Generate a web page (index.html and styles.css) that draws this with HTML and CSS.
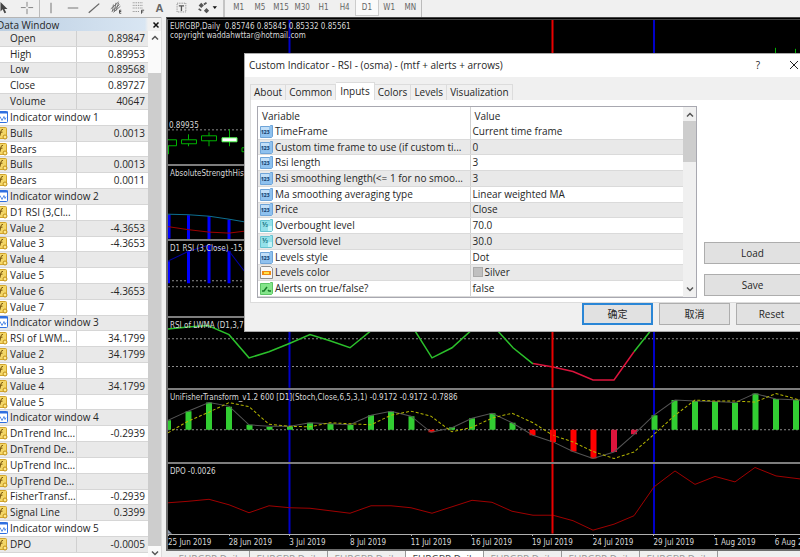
FILE: index.html
```html
<!DOCTYPE html>
<html lang="en">

<head>
	<meta charset="UTF-8" />
	<meta name="viewport" content="width=device-width, initial-scale=1.0" />
	<title>EURGBP,Daily</title>
	<link rel="stylesheet" href="styles.css">
</head>

<body>
	<svg class="sprite" aria-hidden="true">
		<symbol id="i-fx" viewBox="0 0 13 13">
			<rect x="0.5" y="0.5" width="11" height="11" rx="1" fill="#f3d667" stroke="#d2a52c" />
			<path d="M8 2.5q-1.500-.6-2 1.500l-1 4.500q-.4 1.500-1.500 1M4 5.200h3.500" fill="none" stroke="#7d5a10" />
			<circle cx="10" cy="10" r="2" fill="#ffe98a" stroke="#c08f18" />
		</symbol>
		<symbol id="i-win" viewBox="0 0 13 13">
			<rect x="0.5" y="0.5" width="12" height="11" rx="1" fill="#fff" stroke="#2f6fe0" />
			<path d="M0 1.500h13" stroke="#2f6fe0" stroke-width="2" />
			<path d="M3 5.500h2l2 4 2-4 1 3 1-2" fill="none" stroke="#5b8fe8" />
		</symbol>
		<symbol id="i-int" viewBox="0 0 13 13">
			<path d="M.5 1.500h9l1-1h2v11l-1 1H.5z" fill="#8fc1ee" stroke="#6ea4d8" />
			<path d="M1 2h8v3H1z" fill="#c2dff8" />
			<text x="1" y="9" font-size="5" font-weight="bold" fill="#143a66">123</text>
		</symbol>
		<symbol id="i-dbl" viewBox="0 0 13 13">
			<path d="M.5 1.500h9l1-1h2v11l-1 1H.5z" fill="#93e1ea" stroke="#66c3d0" />
			<path d="M8 7h4v5H8z" fill="#c3f3f7" />
			<text x="2" y="8" font-size="7" font-weight="bold" fill="#1c7886">½</text>
		</symbol>
		<symbol id="i-color" viewBox="0 0 13 13">
			<path d="M.5 1.500l1-1h9l2 2v10H.5z" fill="#f6f6f6" stroke="#8d8d8d" />
			<path d="M2 5h9v4H2z" fill="#f08a12" />
			<path d="M4 6h5v2H4z" fill="#ffe34a" />
		</symbol>
		<symbol id="i-bool" viewBox="0 0 13 13">
			<path d="M.5 1.500h9l1-1h2v11l-1 1H.5z" fill="#84e58a" stroke="#5cc565" />
			<path d="M2 9h2l3-4M8 8l1 1h2" fill="none" stroke="#187a28" stroke-width="1.500" />
		</symbol>
		<symbol id="i-up" viewBox="0 0 8 8"><path d="M1 5.500l3-3 3 3" fill="none" stroke="#555" stroke-width="1.500" /></symbol>
		<symbol id="i-down" viewBox="0 0 8 8"><path d="M1 2.500l3 3 3-3" fill="none" stroke="#555" stroke-width="1.500" /></symbol>
	</svg>

	<div class="toolbar">
		<div class="tools pointer-tools">
			<button aria-label="Cursor"><svg viewBox="0 0 16 16"><path d="M4 1v11l2.500-2.500 2 4.500 2-1-2-4H12z" fill="#444" /></svg></button>
			<button aria-label="Crosshair"><svg viewBox="0 0 16 16"><path d="M8 1v5.500M8 9v6M1 7.500h5.500M9.500 7.500H15" stroke="#777" /></svg></button>
		</div>
		<div class="tools line-tools">
			<button aria-label="Vertical line"><svg viewBox="0 0 16 16"><path d="M8 2v12" stroke="#666" /></svg></button>
			<button aria-label="Horizontal line"><svg viewBox="0 0 16 16"><path d="M2 8h12" stroke="#666" /></svg></button>
			<button aria-label="Trendline"><svg viewBox="0 0 16 16"><path d="M2 13.500L14 3" stroke="#666" stroke-width="1.500" /></svg></button>
			<button aria-label="Equidistant channel"><svg viewBox="0 0 16 16"><path d="M2 9l9-8M3 12l9-8M5 13l8-7M5 4L4 12M8 2L6 12M11 2L8 11" fill="none" stroke="#666" /><path d="M14 10.500h-2v3.500h2M12 12h2" fill="none" stroke="#444" /></svg></button>
			<button aria-label="Fibonacci"><svg viewBox="0 0 16 16"><path d="M2 2h12M2 5h12M2 8h12M2 12h8" stroke="#777" stroke-dasharray="1 1" /><path d="M12 14.500v-4h3M12 12.500h2" fill="none" stroke="#444" /></svg></button>
			<button aria-label="Text" class="letter">A</button>
			<button aria-label="Text label"><svg viewBox="0 0 16 16"><path d="M3.500 2.500h10v10h-10z" fill="none" stroke="#777" stroke-dasharray="1 1" /><path d="M5.500 5.500h6M8.500 5.500v6" stroke="#555" stroke-width="1.500" /></svg></button>
		</div>
		<button class="arrows" aria-label="Arrows">
			<svg viewBox="0 0 26 16"><path d="M6 2l3 3-3 3-3-3zM12 8l3 3-3 3-3-3z" fill="#555" /><path d="M3 9l3 2M9 4l3-2" stroke="#555" stroke-width="2" /><path d="M19 6h5l-2.500 3z" fill="#111" /></svg>
		</button>
		<div class="periods">
			<button>M1</button>
			<button>M5</button>
			<button>M15</button>
			<button>M30</button>
			<button>H1</button>
			<button>H4</button>
			<button class="on">D1</button>
			<button>W1</button>
			<button>MN</button>
		</div>
	</div>

	<div class="workspace">
		<aside class="data-window">
			<header>
				<span>Data Window</span>
				<button aria-label="Close data window"><svg viewBox="0 0 8 8"><path d="M1.500 1.500l5 5M6.500 1.500l-5 5" stroke="#111" stroke-width="1.500" /></svg></button>
			</header>
			<div class="data-body">
				<div class="data-scroll">
					<table>
						<tr><td>Open</td><td>0.89847</td></tr>
						<tr><td>High</td><td>0.89953</td></tr>
						<tr><td>Low</td><td>0.89568</td></tr>
						<tr><td>Close</td><td>0.89727</td></tr>
						<tr><td>Volume</td><td>40647</td></tr>
						<tr><th colspan="2"><svg><use href="#i-win" /></svg>Indicator window 1</th></tr>
						<tr><td><svg><use href="#i-fx" /></svg>Bulls</td><td>0.0013</td></tr>
						<tr><td><svg><use href="#i-fx" /></svg>Bears</td><td></td></tr>
						<tr><td><svg><use href="#i-fx" /></svg>Bulls</td><td>0.0013</td></tr>
						<tr><td><svg><use href="#i-fx" /></svg>Bears</td><td>0.0011</td></tr>
						<tr><th colspan="2"><svg><use href="#i-win" /></svg>Indicator window 2</th></tr>
						<tr><td><svg><use href="#i-fx" /></svg>D1 RSI (3,Cl...</td><td></td></tr>
						<tr><td><svg><use href="#i-fx" /></svg>Value 2</td><td>-4.3653</td></tr>
						<tr><td><svg><use href="#i-fx" /></svg>Value 3</td><td>-4.3653</td></tr>
						<tr><td><svg><use href="#i-fx" /></svg>Value 4</td><td></td></tr>
						<tr><td><svg><use href="#i-fx" /></svg>Value 5</td><td></td></tr>
						<tr><td><svg><use href="#i-fx" /></svg>Value 6</td><td>-4.3653</td></tr>
						<tr><td><svg><use href="#i-fx" /></svg>Value 7</td><td></td></tr>
						<tr><th colspan="2"><svg><use href="#i-win" /></svg>Indicator window 3</th></tr>
						<tr><td><svg><use href="#i-fx" /></svg>RSI of LWM...</td><td>34.1799</td></tr>
						<tr><td><svg><use href="#i-fx" /></svg>Value 2</td><td>34.1799</td></tr>
						<tr><td><svg><use href="#i-fx" /></svg>Value 3</td><td></td></tr>
						<tr><td><svg><use href="#i-fx" /></svg>Value 4</td><td>34.1799</td></tr>
						<tr><td><svg><use href="#i-fx" /></svg>Value 5</td><td></td></tr>
						<tr><th colspan="2"><svg><use href="#i-win" /></svg>Indicator window 4</th></tr>
						<tr><td><svg><use href="#i-fx" /></svg>DnTrend Inc...</td><td>-0.2939</td></tr>
						<tr><td><svg><use href="#i-fx" /></svg>DnTrend De...</td><td></td></tr>
						<tr><td><svg><use href="#i-fx" /></svg>UpTrend Inc...</td><td></td></tr>
						<tr><td><svg><use href="#i-fx" /></svg>UpTrend De...</td><td></td></tr>
						<tr><td><svg><use href="#i-fx" /></svg>FisherTransf...</td><td>-0.2939</td></tr>
						<tr><td><svg><use href="#i-fx" /></svg>Signal Line</td><td>0.3399</td></tr>
						<tr><th colspan="2"><svg><use href="#i-win" /></svg>Indicator window 5</th></tr>
						<tr><td><svg><use href="#i-fx" /></svg>DPO</td><td>-0.0005</td></tr>
					</table>
				</div>
				<div class="scrollbar">
					<svg><use href="#i-up" /></svg>
					<div class="thumb"></div>
					<svg><use href="#i-down" /></svg>
				</div>
			</div>
		</aside>

		<main>
			<div class="chart">
				<section class="panel price">
					<svg viewBox="168 20 632 145" preserveAspectRatio="none">
						<path class="blue" d="M289.500 20v145M654 20v145" />
						<path class="red" d="M552.500 20v145" />
						<path class="level" d="M168 130.500h632" />
						<g class="candle">
							<path d="M168.500 140v15M188.500 135v12M209 133v14M229.500 130v17M775.500 48v20M795.500 49v20" />
							<path d="M165.500 140.500h11v6h-11zM181.500 140.500h15v4h-15zM201.500 136.500h15v5h-15z" />
							<path class="full" d="M222 138.500h15v4h-15z" />
							<path d="M242 148.500h14v4h-14z" />
						</g>
					</svg>
					<p>EURGBP,Daily&nbsp; 0.85746 0.85845 0.85332 0.85561<br>copyright waddahwttar@hotmail.com</p>
					<span class="price-tag">0.89935</span>
				</section>
				<section class="panel strength">
					<svg viewBox="168 167 632 73" preserveAspectRatio="none">
						<path class="histo" d="M169 216v24M188.500 216.500v24M209 217.500v24M229 221v24" />
						<polyline stroke="#0d6f92" points="168,215.500 188,216 209,217.500 229,220.500 249,224" />
						<polyline stroke="#a00000" points="168,228 188,231 209,233.500 229,234.500 249,232" />
					</svg>
					<p>AbsoluteStrengthHisto</p>
				</section>
				<section class="panel rsi">
					<svg viewBox="168 242 632 75" preserveAspectRatio="none">
						<path class="level" d="M168 281.500h632M168 287.500h632" />
						<path class="histo" d="M168.500 262v22M188.500 252v32M209 246v38M229 252v32" />
						<polyline stroke="#0000a8" points="168,262 188,252.500 209,246 229,252 249,278" />
					</svg>
					<p>D1 RSI (3,Close) -15.4</p>
				</section>
				<section class="panel lwma">
					<svg viewBox="168 319 632 69" preserveAspectRatio="none">
						<path class="level" d="M168 339.500h632M168 367h632" />
						<path class="blue" d="M289.500 319v69M654 319v69" />
						<path class="thick" stroke="#2bc02b" d="M168 330l20-2 20-1.500 21 9 20 23 20-6 21-8.500 20-8.500 20 6 20 7 21-17 20-9 20 3 21 33 20-10 20-18 20-5 21 23 20 16M634 352.500l20-25" />
						<path class="thick" stroke="#dc143c" d="M533 364l20 3.500 20 4.500 20 8.500h21l20-28" />
						<path class="red" d="M552.500 319v69" />
					</svg>
					<p>RSI of LWMA (D1,3,7</p>
				</section>
				<section class="panel fisher">
					<svg viewBox="168 390 632 72" preserveAspectRatio="none">
						<path class="level" d="M168 429.500h632" />
						<path class="blue" d="M289.500 390v72M654 390v72" />
						<path class="bar-up" d="M168 420v9.500M188.500 411v18.500M209 402.500v27M229 406.500v23M249.500 424.500v5M269.500 426.500v3M290 426v3.500M310 422.500v7M330.500 423.500v6M350.500 424.500v5M371 415v14.500M391 411v18.500M411.500 416v13.500M452 427v2.500M472 418v11.500M492.500 413v16.500M512.500 422.500v7M654.500 415v14.500M674.500 400v29.500M695 401v28.500M715 401.500v28M735 402.500v27M755.500 393.500v36M776 399v30.500M796 400v29.500" />
						<path class="bar-down" stroke="#ff0000" d="M431.500 429.500v2.500M532.500 429.500v5.500M553 429.500v12M573.500 429.500v21.500M593.500 429.500v28.500" />
						<path class="bar-down" stroke="#dc143c" d="M614 429.500v22M634 429.500v4.500" />
						<polyline stroke="#555" points="168,420 188,411 209,402.500 229,406 249,424.500 269,426 290,426 310,422.500 330,423.500 350,424.500 371,415 391,411 411,416 431,432 452,427.500 472,418 492,413 512,422.500 533,435 553,441.500 573,451 593,458 614,451.500 634,434 654,415 675,400 695,401 715,401.500 735,402.500 755,393.500 776,399 800,400" />
						<polyline class="signal" points="168,432.500 188,421 209,412 229,402.500 249,406.500 269,424 290,426 310,426.500 330,422.500 350,423.500 371,424.500 391,415 411,411 431,416 452,431.500 472,427 492,418 512,413 533,422.500 553,435 573,441.500 593,451 614,458 634,451.500 654,434 675,415 695,400 715,401 735,401 755,402 776,393.500 800,400" />
						<path class="red" d="M552.500 390v72" />
					</svg>
					<p>UniFisherTransform_v1.2 600 [D1](Stoch,Close,6,5,3,1) -0.9172 -0.9172 -0.7886</p>
				</section>
				<section class="panel dpo">
					<svg viewBox="168 464 632 70" preserveAspectRatio="none">
						<path class="blue" d="M289.500 464v70M654 464v70" />
						<polyline stroke="#a00000" points="168,503 188,501.500 209,499.500 229,505 249,513 269,506 290,508 310,508.500 330,511 350,513.500 371,506 391,506 411,508 432,513.500 452,507 472,500.500 492,502.500 512,511.500 533,515.500 553,515.500 573,521 593,530.500 614,524.500 634,516 654,487 675,471 695,484.500 715,476.500 735,482 755,467.500 776,476 800,479" />
						<path class="red" d="M552.500 464v70" />
						<path d="M168 530v4h4z" fill="#8f9cb0" />
					</svg>
					<p>DPO -0.0026</p>
				</section>
				<div class="dates">
					<time>25 Jun 2019</time>
					<time>28 Jun 2019</time>
					<time>3 Jul 2019</time>
					<time>8 Jul 2019</time>
					<time>11 Jul 2019</time>
					<time>16 Jul 2019</time>
					<time>19 Jul 2019</time>
					<time>24 Jul 2019</time>
					<time>29 Jul 2019</time>
					<time>1 Aug 2019</time>
					<time>6 Aug 2019</time>
				</div>
			</div>
			<nav class="chart-tabs">
				<button>EURGBP,Daily</button>
				<button>EURGBP,Daily</button>
				<button>EURGBP,Daily</button>
				<button class="on">EURGBP,Daily</button>
				<button>EURGBP,Daily</button>
				<button>EURGBP,Daily</button>
				<button>EURGBP,Daily</button>
			</nav>
		</main>
	</div>

	<div class="dialog" role="dialog" aria-labelledby="dialog-title">
		<header>
			<h1 id="dialog-title">Custom Indicator - RSI - (osma) - (mtf + alerts + arrows)</h1>
			<button aria-label="Help">?</button>
			<button aria-label="Close"><svg viewBox="0 0 8 8"><path d="M0 0l8 8M8 0L0 8" stroke="#222" /></svg></button>
		</header>
		<div class="tabs" role="tablist">
			<button role="tab">About</button>
			<button role="tab">Common</button>
			<button role="tab" class="on" aria-selected="true">Inputs</button>
			<button role="tab">Colors</button>
			<button role="tab">Levels</button>
			<button role="tab">Visualization</button>
		</div>
		<div class="page">
			<div class="inputs">
				<table>
					<thead>
						<tr><th>Variable</th><th>Value</th></tr>
					</thead>
					<tbody>
						<tr><td><svg><use href="#i-int" /></svg>TimeFrame</td><td>Current time frame</td></tr>
						<tr><td><svg><use href="#i-int" /></svg>Custom time frame to use (if custom ti...</td><td>0</td></tr>
						<tr><td><svg><use href="#i-int" /></svg>Rsi length</td><td>3</td></tr>
						<tr><td><svg><use href="#i-int" /></svg>Rsi smoothing length(&lt;= 1 for no smoo...</td><td>3</td></tr>
						<tr><td><svg><use href="#i-int" /></svg>Ma smoothing averaging type</td><td>Linear weighted MA</td></tr>
						<tr><td><svg><use href="#i-int" /></svg>Price</td><td>Close</td></tr>
						<tr><td><svg><use href="#i-dbl" /></svg>Overbought level</td><td>70.0</td></tr>
						<tr><td><svg><use href="#i-dbl" /></svg>Oversold level</td><td>30.0</td></tr>
						<tr><td><svg><use href="#i-int" /></svg>Levels style</td><td>Dot</td></tr>
						<tr><td><svg><use href="#i-color" /></svg>Levels color</td><td><i class="swatch"></i>Silver</td></tr>
						<tr><td><svg><use href="#i-bool" /></svg>Alerts on true/false?</td><td>false</td></tr>
					</tbody>
				</table>
				<div class="scrollbar">
					<svg><use href="#i-up" /></svg>
					<div class="thumb"></div>
					<svg><use href="#i-down" /></svg>
				</div>
			</div>
			<div class="side">
				<button class="btn">Load</button>
				<button class="btn">Save</button>
			</div>
		</div>
		<footer>
			<button class="btn default">确定</button>
			<button class="btn">取消</button>
			<button class="btn">Reset</button>
		</footer>
	</div>
</body>

</html>
```

FILE: styles.css
```css
* {
	box-sizing: border-box;
}

body {
	margin: 0;
	height: 100vh;
	overflow: hidden;
	position: relative;
	display: flex;
	flex-direction: column;
	background-color: #f0f0f0;
	color: #262626;
	font-family: "Open Sans", "Noto Sans CJK SC", sans-serif;
	font-size: 10px;
	line-height: 14px;
}

button {
	margin: 0;
	padding: 0;
	border: 0;
	background: none;
	color: inherit;
	font: inherit;
}

table {
	border-collapse: collapse;
	table-layout: fixed;
}

td,
th {
	padding: 0;
	font-weight: normal;
	text-align: left;
	white-space: nowrap;
	overflow: hidden;
}

.sprite {
	display: none;
}

/* toolbar */
.toolbar {
	flex: none;
	display: flex;
	height: 17px;
	color: #666;
}

.toolbar button {
	flex: 1;
	display: flex;
	justify-content: center;
	align-items: center;
	height: 16px;
}

.toolbar svg {
	height: 14px;
	flex: none;
}

.pointer-tools {
	width: 40px;
	border-right: 1px solid #bbb;
}

.pointer-tools button:first-child {
	margin-left: -8px;
}

.tools {
	display: flex;
}

.line-tools {
	width: 152px;
}

.toolbar .letter {
	font-family: "Liberation Sans", sans-serif;
	font-weight: bold;
	font-size: 11px;
}

.toolbar .arrows {
	flex: none;
	width: 31px;
}

.periods {
	display: flex;
	width: 199px;
	padding-left: 3px;
	border-left: 2px solid #c4c4c4;
	border-right: 1px solid #bbb;
	font-family: "DejaVu Sans Condensed", "DejaVu Sans", sans-serif;
	font-size: 8px;
}

.periods .on {
	background-color: #fafafa;
	border: 1px solid #ccc;
	border-top: 0;
}

/* data window */
.workspace {
	flex: 1;
	min-height: 0;
	display: flex;
}

.data-window {
	flex: none;
	display: flex;
	flex-direction: column;
	width: 162px;
	border-right: 1px solid #ddd;
}

.data-window header {
	display: flex;
	justify-content: space-between;
	height: 14px;
	border-top: 1px solid #b5b5b5;
	background: linear-gradient(90deg, #bccfe2, #d9e6f3 90%, #f0f0f0 92%);
}

.data-window header span {
	margin-left: -3px;
}

.data-window header button {
	width: 9px;
}

.data-window header svg {
	display: block;
	width: 8px;
	height: 8px;
}

.data-body {
	flex: 1;
	min-height: 0;
	display: flex;
	background-color: #fff;
}

.data-scroll {
	width: 148px;
	padding-bottom: 4px;
}

.data-window table {
	width: 100%;
	height: 100%;
	line-height: 13px;
}

.data-window tr:nth-child(odd) {
	background-color: #e9e9e9;
}

.data-window td,
.data-window th {
	padding-left: 10px;
	border-bottom: 1px solid #d6d6d6;
}

.data-window td:first-child {
	width: 76px;
}

.data-window td + td {
	padding: 0 3px 0 0;
	border-left: 1px solid #d0d0d0;
	text-align: right;
}

.data-window td svg,
.data-window th svg {
	width: 13px;
	height: 13px;
	margin-left: -15px;
	margin-right: 2px;
	vertical-align: top;
}

.scrollbar {
	display: flex;
	flex-direction: column;
	align-items: center;
	background-color: #f0f0f0;
}

.scrollbar svg {
	flex: none;
	width: 8px;
	height: 8px;
}

.thumb {
	width: 100%;
	background-color: #cdcdcd;
}

.data-body .scrollbar {
	width: 13px;
	padding-top: 3px;
	background-color: #fafafa;
}

.data-body .thumb {
	flex: 1;
	margin: 31px 0 3px;
}

/* chart */
main {
	flex: 1;
	min-width: 0;
	display: flex;
	flex-direction: column;
	padding-left: 4px;
}

.chart {
	flex: 1;
	min-height: 0;
	display: flex;
	flex-direction: column;
	border: 2px solid #6c6c6c;
	border-top: 3px double #444;
	border-right: 0;
	background-color: #000;
	color: #d8d8d8;
	font-family: "DejaVu Sans Condensed", "DejaVu Sans", sans-serif;
	font-size: 8px;
	line-height: 9px;
}

.panel {
	position: relative;
	min-height: 0;
	border-bottom: 2px solid #7d7d7d;
	overflow: hidden;
}

.panel svg {
	position: absolute;
	width: 100%;
	height: 100%;
	fill: none;
}

.panel p {
	position: relative;
	margin: 3px 2px;
	white-space: nowrap;
}

.price {
	flex: 147 1 0;
}

.price p {
	margin-top: 2px;
}

.strength,
.fisher {
	flex: 74 1 0;
}

.rsi {
	flex: 77 1 0;
}

.lwma {
	flex: 71 1 0;
}

.dpo {
	flex: 71 1 0;
	border-bottom: 1px solid #b0b0b0;
}

.price-tag {
	position: absolute;
	left: 1px;
	bottom: 34px;
}

.blue {
	stroke: #0000c8;
	stroke-width: 2;
}

.red {
	stroke: #e80000;
	stroke-width: 2;
}

.level {
	stroke: #8a8a8a;
	stroke-dasharray: 2 2;
}

.candle {
	stroke: #00b400;
	fill: #000;
}

.candle .full {
	fill: #fff;
	stroke: #5f5;
}

.histo {
	stroke: #0000ff;
	stroke-width: 3;
}

.thick {
	stroke-width: 1.5;
}

.bar-up {
	stroke: #32cd32;
	stroke-width: 6;
}

.bar-down {
	stroke-width: 6;
}

.signal {
	stroke: #b5b500;
	stroke-dasharray: 3 2;
}

.dates {
	flex: none;
	display: flex;
	height: 14px;
	overflow: hidden;
	line-height: 13px;
}

.dates time {
	flex: 0 0 9.6%;
	white-space: nowrap;
}

.dates time::before {
	content: "";
	display: block;
	width: 1px;
	height: 1px;
	background-color: #b0b0b0;
}

.chart-tabs {
	flex: none;
	display: flex;
	height: 6px;
	padding-left: 6px;
	overflow: hidden;
	color: #999;
}

.chart-tabs button {
	width: 78px;
	height: 16px;
	border-right: 1px solid #999;
	line-height: 12px;
}

.chart-tabs .on {
	background-color: #fff;
	color: #444;
}

/* indicator dialog, wider than the space left at the right */
.dialog {
	position: absolute;
	top: 53px;
	left: 244px;
	right: -13px;
	display: flex;
	flex-direction: column;
	border: 1px solid #aaa;
	background-color: #f0f0f0;
}

.dialog header {
	display: flex;
	align-items: center;
	height: 23px;
	padding-left: 4px;
	padding-bottom: 1px;
	background-color: #fff;
}

.dialog h1 {
	flex: 1;
	margin: 0;
	font-size: 10px;
	font-weight: normal;
}

.dialog header button {
	width: 36px;
}

.dialog header svg {
	width: 8px;
	height: 8px;
}

.tabs {
	display: flex;
	align-items: flex-end;
	height: 23px;
	padding-left: 5px;
}

.tabs button {
	height: 16px;
	padding: 0 3px 2px;
	border: 1px solid #dcdcdc;
	border-bottom: 0;
}

.tabs button + button {
	border-left: 0;
}

.tabs .on {
	height: 18px;
	padding: 0 4px 2px;
	background-color: #fff;
}

.page {
	display: flex;
	margin: 0 5px;
	padding: 6px 5px 4px 6px;
	border: 1px solid #dcdcdc;
	border-top: 0;
	background-color: #fff;
}

.inputs {
	flex: none;
	display: flex;
	width: 440px;
	border: 1px solid #a8a8b0;
}

.inputs table {
	flex: 1;
	height: 190px;
	line-height: 13px;
}

.inputs th:first-child {
	width: 212px;
}

.inputs th {
	height: 17px;
	padding-top: 2px;
	padding-left: 4px;
}

.inputs td {
	padding-left: 2px;
	border-bottom: 1px solid #dadada;
}

.inputs tr > * + * {
	border-left: 1px solid #d0d0d0;
}

.inputs tbody tr:nth-child(even) {
	background-color: #e9e9e9;
}

.inputs td svg {
	width: 13px;
	height: 13px;
	margin-right: 2px;
	vertical-align: top;
}

.inputs .scrollbar {
	width: 13px;
	padding: 4px 0;
}

.inputs .thumb {
	height: 41px;
	margin: 2px 0 auto;
}

.swatch {
	display: inline-block;
	width: 10px;
	height: 10px;
	margin-right: 2px;
	border: 1px solid #aaa;
	background-color: #c0c0c0;
	vertical-align: -1px;
}

.side {
	flex: 1;
	display: flex;
	flex-direction: column;
	justify-content: flex-end;
	gap: 10px;
	padding: 0 0 2px 7px;
}

.btn {
	height: 22px;
	padding-bottom: 1px;
	border: 1px solid #adadad;
	background-color: #e1e1e1;
}

.default {
	border: 2px solid #2a86d6;
}

.dialog footer {
	display: flex;
	justify-content: flex-end;
	gap: 6px;
	padding: 0 5px 6px;
}

.dialog footer .btn {
	width: 71px;
}
```
